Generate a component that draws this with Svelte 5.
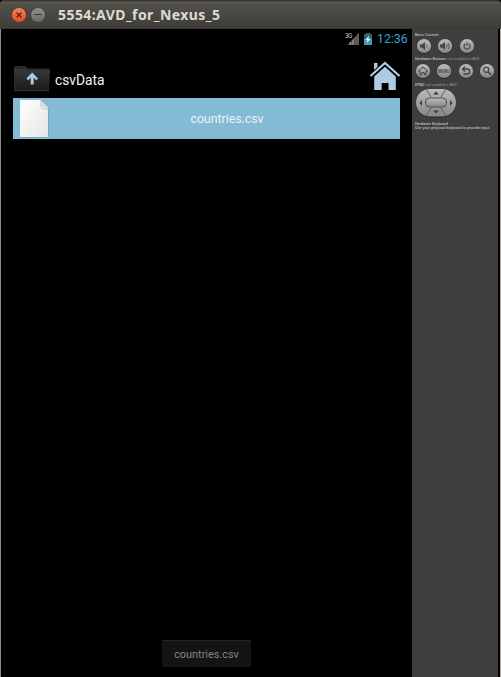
<script>
  const title = '5554:AVD_for_Nexus_5';
  const file = 'countries.csv';
</script>

{#snippet knob()}
  <circle cx="8" cy="8.6" r="7.3" fill="#252525" />
  <circle cx="8" cy="8" r="7.1" fill="url(#metal)" />
{/snippet}

<div class="window">
  <svg class="defs" width="0" height="0" aria-hidden="true">
    <defs>
      <linearGradient id="metal" x1="0" y1="0" x2="0" y2="1">
        <stop offset="0" stop-color="#bcbcbc" />
        <stop offset="1" stop-color="#868686" />
      </linearGradient>
    </defs>
  </svg>
  <header>
    <svg width="16" height="16" viewBox="0 0 16 16">
      <defs><linearGradient id="red" x1="0" y1="0" x2="0" y2="1"><stop offset="0" stop-color="#f58662" /><stop offset="1" stop-color="#df4a1b" /></linearGradient></defs>
      <circle cx="8" cy="8" r="7.5" fill="url(#red)" stroke="#34332f" stroke-width=".7" />
      <path d="M5.5 5.500l5 5M10.500 5.500l-5 5" stroke="#55200f" stroke-width="1.100" />
    </svg>
    <svg width="16" height="16" viewBox="0 0 16 16">
      <defs><linearGradient id="grey" x1="0" y1="0" x2="0" y2="1"><stop offset="0" stop-color="#92918a" /><stop offset="1" stop-color="#686761" /></linearGradient></defs>
      <circle cx="8" cy="8" r="7.5" fill="url(#grey)" stroke="#34332f" stroke-width=".7" />
      <path d="M4.5 7.5h7" stroke="#3a3934" stroke-width="1" />
    </svg>
    <h1>{title}</h1>
  </header>

  <div class="body">
    <main>
      <div class="status">
        <svg width="15" height="14" viewBox="0 0 15 14">
          <path d="M2 13L14 1v12z" fill="#4b4b4b" />
          <path d="M5.500 13v-3M8 13V7.500" stroke="#8f8f8f" stroke-width="1.500" />
          <path d="M10.500 13V5M13 13V2" stroke="#686868" stroke-width="1.500" />
          <text x="0" y="6" font-size="6.500" fill="#c0c0c0" textLength="7.500">3G</text>
        </svg>
        <svg class="battery" width="8" height="12" viewBox="0 0 8 12">
          <path d="M2.200 0h3.600v1.200H8V12H0V1.200h2.200z" fill="#3a9dbd" />
          <path d="M2.200 0h3.600v1.200H8V6H0V1.200h2.200z" fill="#34606e" />
          <path d="M5 2.500L1.300 7h2L2.800 10 6.800 5.600H4.500z" fill="#e3f4fa" />
        </svg>
        <span class="clock">12:36</span>
      </div>
      <div class="path">
        <svg width="38" height="28" viewBox="0 0 38 28">
          <defs><linearGradient id="folder" x1="0" y1="0" x2="0" y2="1"><stop offset="0" stop-color="#383838" /><stop offset="1" stop-color="#1b1b1b" /></linearGradient></defs>
          <path d="M1 25.500V2.500Q1 1 2.500 1H12l3 2.500h20.500Q37 3.500 37 5l-1 20.500z" fill="#2b2b2b" />
          <path d="M1 4h12l2 1.500h21.500l-.7 20H2z" fill="url(#folder)" />
          <path d="M1 25.700h35" stroke="#484848" stroke-width=".7" />
          <path d="M19.200 7.500l5.800 6-1.700 1.700-2.600-2.400V19.500h-3v-6.700l-2.600 2.400-1.700-1.700z" fill="#adcce0" />
        </svg>
        <span class="folder">csvData</span>
        <svg class="home" width="32" height="30" viewBox="0 0 32 30">
          <path d="M5 2h3.500v4L5 9z" fill="#adcbe2" />
          <path d="M1.500 15L16 2l14.500 13" fill="none" stroke="#adcbe2" stroke-width="2.200" />
          <path d="M5.200 15.500L16 5.800l10.800 9.700V29H19.500v-7h-6.800v7H5.200z" fill="#adcbe2" />
        </svg>
      </div>
      <div class="file">
        <svg width="30" height="39" viewBox="0 0 30 39">
          <defs><linearGradient id="paper" x1="0" y1="0" x2="1" y2="1"><stop offset="0" stop-color="#fff" /><stop offset="1" stop-color="#e4e5e6" /></linearGradient></defs>
          <path d="M1 1.500h20L29.500 9v29.500H1z" fill="#638fa1" opacity=".7" />
          <path d="M1 1h20l8 7.500V38H1z" fill="url(#paper)" />
          <path d="M21 1l8 7.500h-8z" fill="#dadbdc" />
          <path d="M21 9h8v3z" fill="#d5d6d7" />
        </svg>
        <span>{file}</span>
      </div>
      <div class="toast"><span>{file}</span></div>
    </main>

    <aside>
      <svg width="34" height="7"><text x="0" y="4.500" textLength="24" lengthAdjust="spacingAndGlyphs" font-weight="bold">Basic Controls</text></svg>
      <div class="buttons basic">
        <svg viewBox="0 0 16 17">{@render knob()}<path d="M4 6.500h2L9 4v8L6 9.500H4z" fill="#444" /><path d="M10.500 6.500q1.200 1.500 0 3" fill="none" stroke="#666" /></svg>
        <svg viewBox="0 0 16 17">{@render knob()}<path d="M3 6.500h2L8 4v8L5 9.500H3z" fill="#444" /><path d="M9.500 6.300q1.200 1.700 0 3.400M11.200 5q2.200 3 0 6" fill="none" stroke="#555" /></svg>
        <svg viewBox="0 0 16 17">{@render knob()}<path d="M6.200 5.800a3 3 0 1 0 3.600 0M8 4v4" fill="none" stroke="#444" stroke-width="1.100" /></svg>
      </div>
      <svg width="76" height="7"><text x="0" y="4.500" textLength="31" lengthAdjust="spacingAndGlyphs" font-weight="bold">Hardware Buttons</text><text class="dim" x="32.300" y="4.500" textLength="32.500" lengthAdjust="spacingAndGlyphs">not enabled in AVD</text></svg>
      <div class="buttons hardware">
        <svg viewBox="0 0 16 17">{@render knob()}<path d="M3.300 8.200L8 4l4.700 4.200h-1.500v3.500H9.300V9.500H6.700v2.200H4.800V8.200z" fill="none" stroke="#444" stroke-width="1" /></svg>
        <svg viewBox="0 0 16 17">{@render knob()}<text class="menu" x="2" y="9.700" textLength="12" lengthAdjust="spacingAndGlyphs">MENU</text></svg>
        <svg viewBox="0 0 16 17">{@render knob()}<path d="M7 3.500L4.500 6 7 8.500M4.500 6h4.700q2.500 0 2.500 2.500T9.200 11H5.500" fill="none" stroke="#444" stroke-width="1.300" /></svg>
        <svg viewBox="0 0 16 17">{@render knob()}<circle cx="7.200" cy="6.800" r="2.600" fill="none" stroke="#444" stroke-width="1.200" /><path d="M9 8.700l3.200 3.200" stroke="#444" stroke-width="1.600" /></svg>
      </div>
      <svg width="54" height="7"><text x="0" y="4.500" textLength="9.500" lengthAdjust="spacingAndGlyphs" font-weight="bold">DPAD</text><text class="dim" x="10.500" y="4.500" textLength="31.500" lengthAdjust="spacingAndGlyphs">not enabled in AVD</text></svg>
      <svg class="dpad" width="42" height="30" viewBox="0 0 42 30">
        <rect x="1" y="1.500" width="40" height="28" rx="14" fill="#252525" />
        <rect x="1" y="1" width="40" height="27.500" rx="13.700" fill="url(#metal)" />
        <path d="M11 1l5 8M31 1l-5 8M11 28l5-8M31 28l-5-8" stroke="#555" stroke-width=".9" />
        <rect x="10.500" y="10" width="21" height="9" rx="4" fill="url(#metal)" stroke="#4c4c4c" />
        <path d="M18 6.500l3-3 3 3zM18 22.500h6l-3 3zM7 12v6l-2.500-3zM35 12v6l2.500-3z" fill="#3c3c3c" />
      </svg>
      <svg class="keyboard" width="82" height="12"><text x="0" y="5" textLength="33" lengthAdjust="spacingAndGlyphs" font-weight="bold">Hardware Keyboard</text><text x="0" y="9.300" textLength="74.500" lengthAdjust="spacingAndGlyphs" font-weight="bold">Use your physical keyboard to provide input</text></svg>
    </aside>
  </div>
</div>

<style>
  :global(body) { margin: 0; background: #000; }
  .window { width: 501px; height: 677px; box-sizing: border-box; display: flex; flex-direction: column; background: #000; font-family: Roboto, sans-serif; overflow: hidden; }
  svg { display: block; flex: none; overflow: visible; }
  .defs { height: 0; }
  header { height: 29px; box-sizing: border-box; flex: none; display: flex; align-items: center; gap: 2.500px; padding: 2px 0 0 11px; background: linear-gradient(#36352f 0, #36352f 1px, #5b5a54 2px, #504f49 4px, #3e3d38 28px, #32312d 29px); border-radius: 4px 4px 0 0; }
  header svg { margin-top: -1px; }
  h1 { margin: -2px 0 0 10px; font: bold 14px/20px "Noto Sans", sans-serif; color: #dfdbd2; white-space: nowrap; letter-spacing: .43px; }
  .body { flex: 1; display: flex; min-height: 0; border-left: 1px solid #8b8a85; border-right: 1px solid #b5b3aa; }
  main { width: 411px; flex: none; box-sizing: border-box; display: flex; flex-direction: column; background: #000; padding: 0 12px; }
  .status { height: 20px; display: flex; align-items: center; justify-content: flex-end; margin-right: -8px; }
  .status text { font-family: Roboto, sans-serif; }
  .battery { margin: 0 5px 0 4px; }
  .clock { font-size: 12.300px; line-height: 20px; color: #33a5d0; width: 31px; white-space: nowrap; }
  .path { height: 49px; box-sizing: border-box; display: flex; align-items: center; padding: 12px 0 0 0; }
  .path > svg:first-child { margin-top: -2px; }
  .folder { margin: 0 auto 0 4px; font-size: 13.800px; color: #f2f2f2; }
  .home { margin: -8px -1px 0 0; }
  .file { height: 41px; display: flex; align-items: center; background: #83bbd5; padding-left: 6px; }
  .file span { flex: 1; text-align: center; margin-left: 5px; font-size: 12.300px; color: #e9f2f7; }
  .toast { margin: auto auto 10px; width: 89px; height: 27px; box-sizing: border-box; display: flex; align-items: center; justify-content: center; background: #141414; border-top: 1px solid #252525; border-radius: 1px; font-size: 10.900px; color: #858585; }
  aside { width: 86px; box-sizing: border-box; padding: 2px 0 0 2.500px; background: #3e3e3e; }
  aside text { font-family: "Liberation Sans", sans-serif; font-size: 4px; fill: #b8b8b8; }
  aside text.dim { fill: #999; }
  aside text.menu { font-size: 4.500px; font-weight: bold; fill: #444; }
  .buttons { display: flex; gap: 5.300px; }
  .buttons svg { width: 16px; height: 17px; }
  .basic { margin: -1px 0 0 1.500px; height: 18px; align-items: center; }
  .hardware { margin: 0 0 0 .500px; height: 19px; align-items: center; }
  .dpad { margin: 0; }
  .keyboard { margin-top: 1.500px; }
</style>
